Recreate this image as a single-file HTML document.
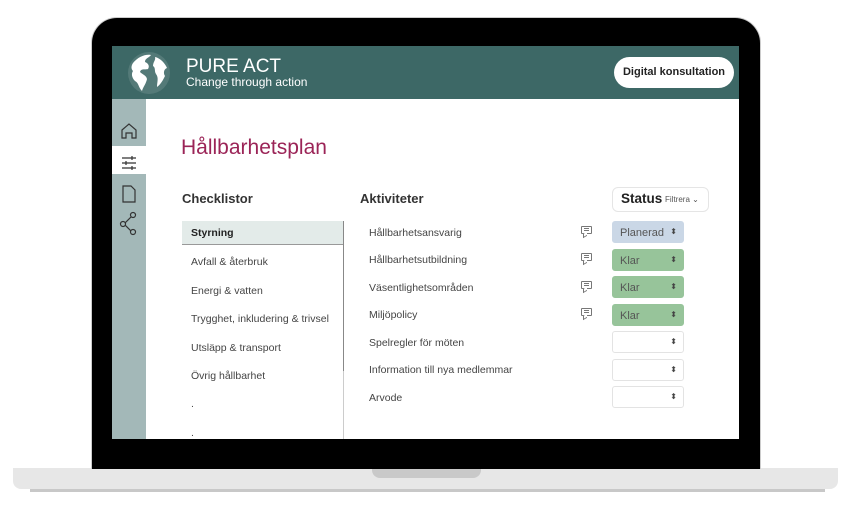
<!DOCTYPE html>
<html><head><meta charset="utf-8"><style>
*{margin:0;padding:0;box-sizing:border-box}
body{width:851px;height:506px;background:#fff;position:relative;overflow:hidden;font-family:"Liberation Sans",sans-serif;color:#333}
.a{position:absolute}
.lbl{font-size:10.5px;color:#444}
.sel{position:absolute;left:612px;width:72px;height:22px;border-radius:3px;font-size:11px;color:#555;padding:5px 0 0 7px;border:1px solid #e3e3e3}
.sel:after{content:"⬍";position:absolute;right:6px;top:5px;font-size:8px;color:#444}
.ci{position:absolute;left:581px;width:11px;height:8px;border:1px solid #777;border-radius:1px}
.ci:before{content:"";position:absolute;left:2px;top:1px;width:5px;height:1px;background:#777;box-shadow:0 2px 0 #777}
.ci:after{content:"";position:absolute;left:1px;top:6px;width:3px;height:3px;border-left:1px solid #777;border-bottom:1px solid #777;background:#fff;transform:skewY(-30deg)}
.ck{position:absolute;left:191px;font-size:10.5px;color:#444}
</style></head><body>
<div class="a" style="left:13px;top:468px;width:825px;height:21px;background:#e7e7e7;border-radius:0 0 8px 8px"></div>
<div class="a" style="left:30px;top:489px;width:795px;height:3px;background:#c8c8c8"></div>
<div class="a" style="left:372px;top:468px;width:109px;height:10px;background:#c9c9c9;border-radius:0 0 8px 8px"></div>
<div class="a" style="left:91px;top:17px;width:670px;height:452px;background:#000;border-radius:26px 26px 0 0;border:1px solid #ccc;border-bottom:none"></div>
<div class="a" style="left:112px;top:46px;width:627px;height:393px;background:#fff"></div>
<div class="a" style="left:112px;top:46px;width:627px;height:53px;background:#3d6866"></div>
<svg class="a" style="left:125px;top:49px" width="48" height="48" viewBox="0 0 48 48"><circle cx="24" cy="24" r="21" fill="#fff" opacity=".12"/><path d="M8 14c5-6 12-9 18-8-2 3-6 3-6 7 3 1 5 4 3 7-3 1-7-1-8 3 3 3 6 3 7 7-1 5-4 8-5 12-4-4-3-8-7-10-3-3-4-7-2-10-2-2-2-5 0-8z M30 8c5 1 10 6 12 11-3 1-4 5-2 8-2 4-4 8-8 11 0-5 2-9-1-13-2-3 0-6-3-8 0-4 3-6 2-9z" fill="#fff"/></svg>
<div class="a" style="left:186px;top:56px;color:#fff;font-size:19px">PURE ACT</div>
<div class="a" style="left:186px;top:75px;color:#fff;font-size:12px">Change through action</div>
<div class="a" style="left:614px;top:57px;width:120px;height:31px;background:#fff;border-radius:16px;font-size:11px;font-weight:bold;color:#222;text-align:center;line-height:31px">Digital konsultation</div>
<div class="a" style="left:112px;top:99px;width:34px;height:340px;background:#a3b8b8"></div>
<div class="a" style="left:112px;top:146px;width:34px;height:28px;background:#fff"></div>
<svg class="a" style="left:118px;top:120px" width="22" height="120" viewBox="0 0 22 120" fill="none" stroke="#333" stroke-width="1.2"><path d="M4 10l7-6 7 6v8h-4v-5h-6v5H4z"/><path d="M4 38h14M4 43h14M4 48h14M14 36v4M8 41v4M14 46v4"/><path d="M5 66h8l4 4v12H5z"/><circle cx="15" cy="95" r="2.5"/><circle cx="5" cy="104" r="2.5"/><circle cx="15" cy="112" r="2.5"/><path d="M7 103l6-6M7 105l6 6"/></svg>
<div class="a" style="left:181px;top:136px;font-size:21px;color:#9b2457">Hållbarhetsplan</div>
<div class="a" style="left:182px;top:191px;font-size:13px;font-weight:bold;color:#333">Checklistor</div>
<div class="a" style="left:360px;top:191px;font-size:13px;font-weight:bold;color:#333">Aktiviteter</div>
<div class="a" style="left:612px;top:187px;width:97px;height:25px;border:1px solid #e5e5e5;border-radius:6px"></div>
<div class="a" style="left:621px;top:191px;font-size:13.5px;font-weight:bold;color:#222">Status</div>
<div class="a" style="left:665px;top:195px;font-size:8px;color:#555">Filtrera ⌄</div>
<div class="a" style="left:182px;top:221px;width:161px;height:24px;background:#e3ebe9;border-bottom:1px solid #999"></div>
<div class="a" style="left:343px;top:221px;width:1px;height:218px;background:#ccc"></div>
<div class="a" style="left:343px;top:221px;width:1px;height:150px;background:#888"></div>
<div class="ck" style="top:227px;font-weight:bold;color:#222">Styrning</div>
<div class="ck" style="top:256px">Avfall &amp; återbruk</div>
<div class="ck" style="top:285px">Energi &amp; vatten</div>
<div class="ck" style="top:313px">Trygghet, inkludering &amp; trivsel</div>
<div class="ck" style="top:342px">Utsläpp &amp; transport</div>
<div class="ck" style="top:370px">Övrig hållbarhet</div>
<div class="ck" style="top:398px">.</div>
<div class="ck" style="top:427px">.</div>
<div class="a lbl" style="left:369px;top:227px">Hållbarhetsansvarig</div>
<div class="a lbl" style="left:369px;top:254px">Hållbarhetsutbildning</div>
<div class="a lbl" style="left:369px;top:282px">Väsentlighetsområden</div>
<div class="a lbl" style="left:369px;top:309px">Miljöpolicy</div>
<div class="a lbl" style="left:369px;top:337px">Spelregler för möten</div>
<div class="a lbl" style="left:369px;top:364px">Information till nya medlemmar</div>
<div class="a lbl" style="left:369px;top:392px">Arvode</div>
<div class="ci" style="top:226px"></div><div class="ci" style="top:253px"></div><div class="ci" style="top:281px"></div><div class="ci" style="top:308px"></div>
<div class="sel" style="top:221px;background:#cad7e6;border-color:#cad7e6">Planerad</div>
<div class="sel" style="top:249px;background:#97c49a;border-color:#97c49a">Klar</div>
<div class="sel" style="top:276px;background:#97c49a;border-color:#97c49a">Klar</div>
<div class="sel" style="top:304px;background:#97c49a;border-color:#97c49a">Klar</div>
<div class="sel" style="top:331px"></div>
<div class="sel" style="top:359px"></div>
<div class="sel" style="top:386px"></div>
</body></html>
